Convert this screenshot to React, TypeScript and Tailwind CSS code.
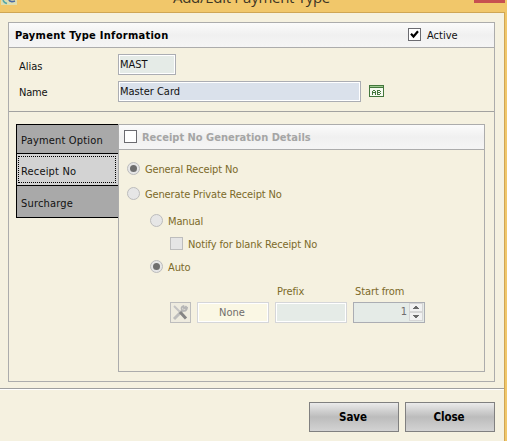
import React from 'react';

function Check({ checked = false, disabled = false }: { checked?: boolean; disabled?: boolean }) {
  return (
    <span
      className={`flex h-[13px] w-[13px] shrink-0 border ${
        disabled ? 'border-[#bdbdbd] bg-[#e5e5e5]' : 'border-[#6b6b70] bg-white'
      }`}
    >
      {checked && (
        <svg width="11" height="11" viewBox="0 0 11 11">
          <path d="M2 4.8 L4.5 7.5 L9 2.3" fill="none" stroke="#000" strokeWidth="2.2" />
        </svg>
      )}
    </span>
  );
}

function Radio({ selected = false }: { selected?: boolean }) {
  return (
    <span className="flex h-[13px] w-[13px] shrink-0 items-center justify-center rounded-full border border-[#bcbcbc] bg-[#e6e6e6]">
      {selected && <span className="h-[7px] w-[7px] rounded-full bg-[#6e6e6e]" />}
    </span>
  );
}

const header =
  'flex h-[25px] shrink-0 items-start border-b border-[#acacac] bg-linear-to-b from-[#fbfbfb] via-[#f0f0f0] to-[#f5f5f5] pt-[5px] font-bold';

const option = 'flex h-[13px] items-start gap-[5px] leading-[15px] tracking-[-0.14px]';

function Button({ children }: { children: React.ReactNode }) {
  return (
    <button className="h-[30px] w-[90px] border border-[#808080] bg-linear-to-b from-[#ebebeb] via-[#bcbcbc] to-[#d3d3d3] pr-[2px] text-[11.5px] font-bold tracking-[-0.05px]">
      {children}
    </button>
  );
}

export default function App() {
  return (
    <div className="h-[441px] w-[507px] overflow-hidden bg-[#f1c76a] font-['DejaVu_Sans_Condensed','DejaVu_Sans',sans-serif] text-[11px] leading-[13px] whitespace-nowrap text-[#111]">
      <div className="flex h-[12px] items-start overflow-hidden">
        <svg className="ml-px shrink-0" width="16" height="5" viewBox="0 0 16 5">
          <path d="M0 0H16V5H0Z" fill="#ddddb0" />
          <path d="M2 0Q3 3 6 3.5" fill="none" stroke="#55a6a8" strokeWidth="1.5" />
          <path d="M8 0Q9 2.5 14 1" fill="none" stroke="#4969a4" strokeWidth="1.8" />
        </svg>
        <span className="-mt-[13px] ml-[156px] w-[158px] font-['Open_Sans',sans-serif] text-[15px] leading-[20px] tracking-[-0.28px] text-[#3d3524]">
          Add/Edit Payment Type
        </span>
        <span className="ml-[143px] h-[3px] w-[31px] bg-[#c75050]" />
      </div>
      <div className="flex h-[429px] w-[505px] flex-col border-t border-r border-[#cfa654] bg-[#f5f1e0]">
        <div className="mt-[9px] ml-[8px] flex h-[360px] w-[487px] flex-col border border-[#acacac]">
          <div className={`${header} pl-[6px]`}>
            <span className="w-[393px] pt-px tracking-[0.28px] text-black">Payment Type Information</span>
            <Check checked />
            <span className="ml-[6px] pt-px font-normal">Active</span>
          </div>
          <div className="h-[64px] shrink-0 border-b border-[#a2a2a0] pt-[6px] pl-[9px]">
            <div className="flex h-[21px]">
              <span className="w-[100px] pt-[6px] pl-px">Alias</span>
              <span className="w-[58px] border border-[#abadb3] bg-[#e5ebe7] pt-[3px] pl-px shadow-[inset_0_0_0_1px_#fff]">
                MAST
              </span>
            </div>
            <div className="mt-[6px] flex h-[21px]">
              <span className="w-[100px] pt-[5px] pl-px tracking-[-0.2px]">Name</span>
              <span className="w-[243px] border border-[#abadb3] bg-[#dae1eb] pt-[3px] pl-px shadow-[inset_0_0_0_1px_#fff]">
                Master Card
              </span>
              <svg className="mt-[4px] ml-[8px]" width="15" height="12" viewBox="0 0 15 12" shapeRendering="crispEdges">
                <path d="M0 0H15V12H0Z" fill="#44773d" />
                <path d="M1 1H14V2H1Z" fill="#9fca91" />
                <path d="M1 3H14V11H1Z" fill="#f7faf2" />
                <path d="M4 5H6V6H7V10H6V8H4V10H3V6H4ZM4 6V7H6V6ZM8 5H11V6H12V7H11V8H12V9H11V10H8ZM9 6V7H11V6ZM9 8V9H11V8Z" fill="#44773d" fillRule="evenodd" />
              </svg>
            </div>
          </div>
          <div className="mt-[12px] ml-[7px] flex">
            <div className="h-[94px] w-[102px] border-y border-l border-black bg-[#a9a9a9] tracking-[0.17px]">
              <div className="h-[29px] border-b border-black pt-[9px] pl-[4px]">Payment Option</div>
              <div className="h-[32px] border-b border-black bg-[#d3d3d3] p-[2px] pl-px">
                <div className="h-[27px] w-[98px] border border-dotted border-black pt-[8px] pl-[2px]">Receipt No</div>
              </div>
              <div className="pt-[11px] pl-[4px]">Surcharge</div>
            </div>
            <div className="h-[248px] w-[367px] border border-[#acacac] text-[#7c6a29]">
              <div className={`${header} pl-[5px] text-[#a5a5a5]`}>
                <Check />
                <span className="ml-[5px] pt-px">Receipt No Generation Details</span>
              </div>
              <div className={`${option} mt-[12px] ml-[8px]`}>
                <Radio selected />
                <span>General Receipt No</span>
              </div>
              <div className={`${option} mt-[12px] ml-[8px]`}>
                <Radio />
                <span>Generate Private Receipt No</span>
              </div>
              <div className={`${option} mt-[14px] ml-[31px]`}>
                <Radio />
                <span>Manual</span>
              </div>
              <div className={`${option} mt-[10px] ml-[51px]`}>
                <Check disabled />
                <span>Notify for blank Receipt No</span>
              </div>
              <div className={`${option} mt-[10px] ml-[31px]`}>
                <Radio selected />
                <span>Auto</span>
              </div>
              <div className="mt-[12px] ml-[158px] flex tracking-[-0.1px]">
                <span className="w-[78px]">Prefix</span>
                <span>Start from</span>
              </div>
              <div className="mt-[4px] ml-[51px] flex h-[21px]">
                <span className="w-[21px] border border-[#bdbdbd] bg-[#eeebdf]">
                  <svg width="19" height="19" viewBox="0 0 19 19" fill="none">
                    <path d="M3 16L12 7" stroke="#bdbdbd" strokeWidth="3" />
                    <path d="M15.5 3L13 5.5L12.5 3Q9.5 4 11 7.5L12.5 8Q15.5 8 16 5L14 5.5" stroke="#b5b5b5" strokeWidth="1.7" />
                    <path d="M3 3L9 9" stroke="#c3c3c3" strokeWidth="2" />
                    <path d="M9 9L15 15.5" stroke="#858585" strokeWidth="3" />
                  </svg>
                </span>
                <span className="ml-[6px] w-[72px] border border-[#d5d6d9] bg-[#faf7e4] pt-[3px] pr-[2px] text-center text-[#706d6d] shadow-[inset_0_0_0_1px_#fff]">
                  None
                </span>
                <span className="ml-[6px] w-[72px] border border-[#d5d6d9] bg-[#e5ebe7] shadow-[inset_0_0_0_1px_#fff]" />
                <span className="ml-[6px] flex w-[72px] border border-[#abadb3] bg-[#e5ebe7] text-[#706d6d]">
                  <span className="w-[55px] pt-[2px] pr-[2px] text-right">1</span>
                  <svg width="15" height="19" viewBox="0 0 15 19" shapeRendering="crispEdges">
                    <path d="M.5 .5H13.5V8.5H.5ZM.5 9.5H13.5V17.5H.5Z" fill="#f1f1f1" stroke="#d5d5d5" />
                    <path d="M6 3H8V4H9V5H10V6H4V5H5V4H6ZM4 12H10V13H9V14H8V15H6V14H5V13H4Z" fill="#696969" />
                  </svg>
                </span>
              </div>
            </div>
          </div>
        </div>
        <div className="mt-[6px] border-t border-[#9f9f9f]">
          <div className="flex justify-end gap-[6px] border-t border-white pt-[12px] pr-[9px] text-black">
            <Button>Save</Button>
            <Button>Close</Button>
          </div>
        </div>
      </div>
    </div>
  );
}
